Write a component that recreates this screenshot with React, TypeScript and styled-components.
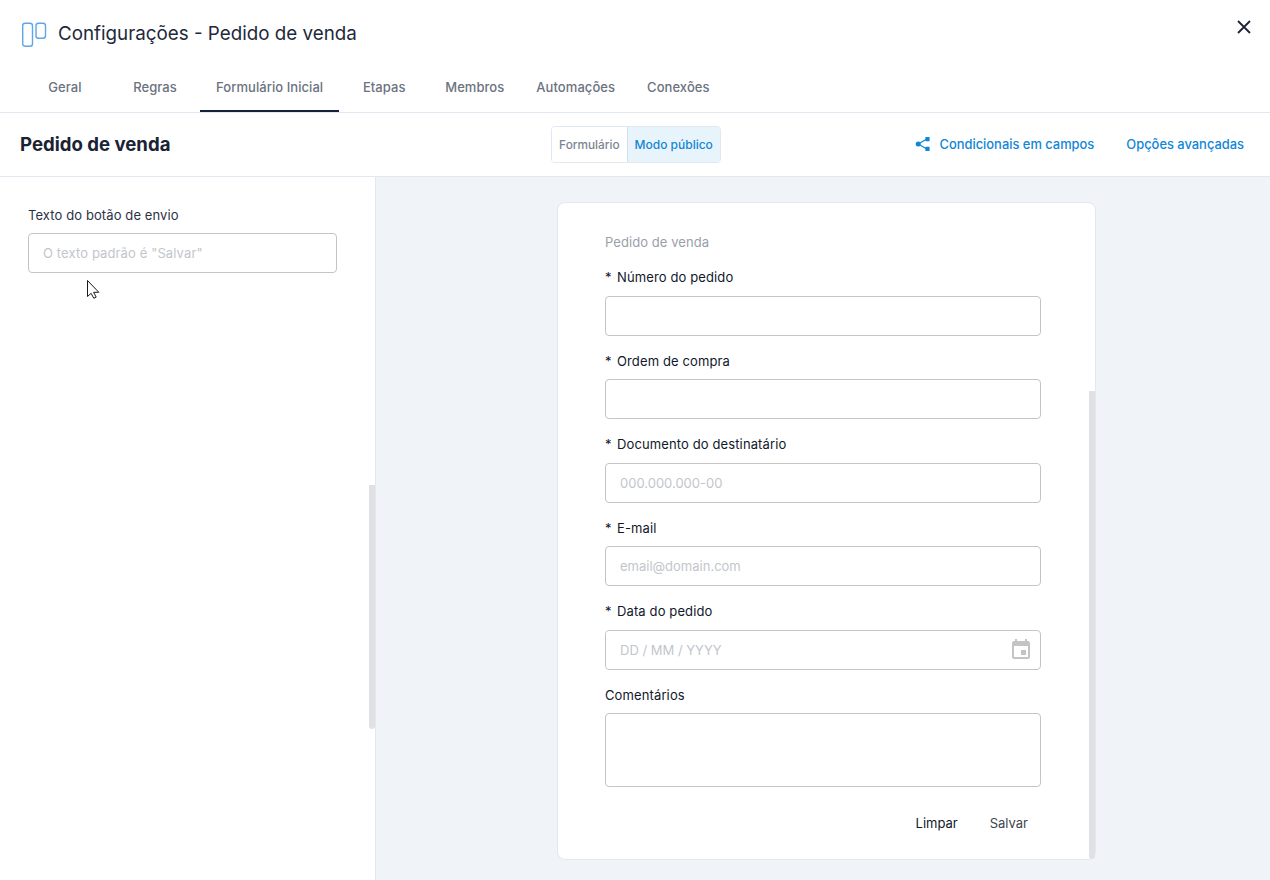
import React from "react";
import styled, { createGlobalStyle } from "styled-components";

const GlobalStyle = createGlobalStyle`
  html, body {
    margin: 0;
    height: 100%;
    background: #ffffff;
    font-family: Inter, "Noto Sans", sans-serif;
    overflow: hidden;
  }
  *, *:before, *:after {
    box-sizing: border-box;
  }
`;

const Page = styled.div`
  position: relative;
  width: 1270px;
  height: 880px;
  display: flex;
  flex-direction: column;
  overflow: hidden;
`;

const Header = styled.header`
  height: 113px;
  border-bottom: 1px solid #e2e8f0;
  display: flex;
  flex-direction: column;
`;

const TitleRow = styled.div`
  height: 60px;
  margin-top: 4px;
  padding: 0 17px 0 21px;
  display: flex;
  align-items: center;
  justify-content: space-between;
`;

const TitleGroup = styled.div`
  display: flex;
  align-items: center;
  gap: 11px;
`;

const Title = styled.h1`
  margin: 0;
  font-size: 18.8px;
  line-height: 26px;
  font-weight: 400;
  color: #1e293b;
`;

const CloseButton = styled.button`
  border: 0;
  padding: 0;
  background: none;
  width: 18px;
  height: 18px;
  margin-top: -14px;
  color: #1e2235;
  display: flex;
`;

const Tabs = styled.nav`
  flex: 1;
  display: flex;
  padding-left: 20px;
`;

const Tab = styled.div<{ $active?: boolean }>`
  min-width: 90px;
  padding: 0 16px;
  display: flex;
  align-items: center;
  justify-content: center;
  font-size: 13px;
  font-weight: 500;
  letter-spacing: 0.06px;
  color: #6b7280;
  white-space: nowrap;
  border-bottom: 2px solid ${(p) => (p.$active ? "#16213e" : "transparent")};
`;

const SubBar = styled.div`
  height: 64px;
  padding: 0 26px 0 20px;
  border-bottom: 1px solid #e2e8f0;
  display: grid;
  grid-template-columns: 1fr auto 1fr;
  align-items: center;
`;

const SubTitle = styled.h2`
  margin: 0 0 2px;
  font-size: 18.6px;
  font-weight: 700;
  color: #1a2233;
`;

const Toggle = styled.div`
  display: flex;
  height: 37px;
  margin-left: 8px;
  border: 1px solid #e2e8f0;
  border-radius: 4px;
  overflow: hidden;
`;

const ToggleItem = styled.div<{ $active?: boolean }>`
  padding: 0 7px;
  display: flex;
  align-items: center;
  font-size: ${(p) => (p.$active ? "12px" : "11.8px")};
  font-weight: 500;
  color: ${(p) => (p.$active ? "#1086d6" : "#7c8490")};
  background: ${(p) => (p.$active ? "#e8f4fb" : "#ffffff")};
  border-left: ${(p) => (p.$active ? "1px solid #d5e0ec" : "0")};
`;

const Actions = styled.div`
  display: flex;
  justify-content: flex-end;
  align-items: center;
  gap: 32px;
`;

const ActionLink = styled.a`
  display: flex;
  align-items: center;
  gap: 8px;
  padding-bottom: 1px;
  font-size: 12.9px;
  font-weight: 500;
  color: #1086d6;
  white-space: nowrap;
`;

const Body = styled.div`
  flex: 1;
  display: flex;
  min-height: 0;
`;

const Input = styled.input`
  display: block;
  width: 100%;
  height: 40px;
  padding: 0 14px;
  border: 1px solid #c4c4c4;
  border-radius: 4px;
  font: 400 13px Inter, sans-serif;
  background: #ffffff;
  outline: none;

  &::placeholder {
    color: #c2c6cc;
    opacity: 1;
  }
`;

const Sidebar = styled.aside`
  position: relative;
  width: 376px;
  padding: 28px 38px 0 28px;
  border-right: 1px solid #e2e8f0;

  ${Input} {
    letter-spacing: 0.12px;
  }
`;

const SideLabel = styled.label`
  display: block;
  font-size: 13px;
  line-height: 20px;
  font-weight: 400;
  letter-spacing: 0.1px;
  color: #2b3245;
  margin-bottom: 8px;
`;

const TextArea = styled.textarea`
  display: block;
  width: 100%;
  height: 74px;
  border: 1px solid #c4c4c4;
  border-radius: 4px;
  resize: none;
  outline: none;
`;

const DateBox = styled.div`
  height: 40px;
  padding-right: 7px;
  display: flex;
  align-items: center;
  border: 1px solid #c4c4c4;
  border-radius: 4px;

  ${Input} {
    flex: 1;
    height: 38px;
    border: 0;
  }

  svg {
    color: #c4c4c4;
    flex: none;
  }
`;

const Scrollbar = styled.div<{ $top: number; $height: number }>`
  position: absolute;
  top: ${(p) => p.$top}px;
  right: 0;
  width: 6px;
  height: ${(p) => p.$height}px;
  background: #dfe1e4;
  border-radius: 0 0 3px 3px;
`;

const Canvas = styled.main`
  flex: 1;
  background: #f0f3f8;
  padding: 25px 0 0 181px;
`;

const Card = styled.section`
  position: relative;
  width: 539px;
  height: 658px;
  padding: 29px 54px 0 47px;
  background: #ffffff;
  border: 1px solid #e2e8f0;
  border-radius: 8px;
`;

const CardTitle = styled.div`
  font-size: 13px;
  line-height: 20px;
  letter-spacing: 0.07px;
  color: #9aa0a8;
  margin-bottom: 15.4px;
`;

const Fields = styled.div`
  display: flex;
  flex-direction: column;
  gap: 15px;
`;

const FieldLabel = styled.label`
  display: block;
  font-size: 13px;
  line-height: 20px;
  letter-spacing: 0.12px;
  color: #10182b;
  margin-bottom: 8.5px;
`;

const Star = styled.span`
  display: inline-block;
  width: 12px;
`;

const Buttons = styled.div`
  display: flex;
  justify-content: flex-end;
  margin-top: 20px;
`;

const FormButton = styled.button<{ $muted?: boolean }>`
  height: 32px;
  padding: 0 13px;
  border: 0;
  background: none;
  font: 400 13px Inter, sans-serif;
  color: ${(p) => (p.$muted ? "#3f444d" : "#10182b")};
  & + & {
    margin-left: 6px;
  }
`;

const Cursor = styled.svg`
  position: absolute;
  left: 87px;
  top: 280px;
`;

const tabs = ["Geral", "Regras", "Formulário Inicial", "Etapas", "Membros", "Automações", "Conexões"];

const fields = [
  { label: "Número do pedido", required: true },
  { label: "Ordem de compra", required: true },
  { label: "Documento do destinatário", required: true, placeholder: "000.000.000-00" },
  { label: "E-mail", required: true, placeholder: "email@domain.com" },
];

const Logo = () => (
  <svg width="26" height="27" viewBox="0 0 26 27" fill="none" stroke="#5ea6e6" strokeWidth="1.4">
    <rect x="1.7" y="2.3" width="9.8" height="23" rx="2.5" />
    <rect x="15" y="2.3" width="9.5" height="15" rx="2.5" />
  </svg>
);

const CloseIcon = () => (
  <svg width="18" height="18" viewBox="0 0 18 18" fill="none" stroke="currentColor" strokeWidth="1.8">
    <path d="M3 3l12 12M15 3L3 15" />
  </svg>
);

const NodesIcon = () => (
  <svg width="16" height="16" viewBox="0 0 16 16" fill="#1086d6" stroke="#1086d6">
    <path d="M3 8L12 3M3 8l9 5" fill="none" strokeWidth="1.3" />
    <circle cx="3.2" cy="8" r="2.5" stroke="none" />
    <rect x="10.4" y="1" width="4.2" height="4.2" rx="0.6" stroke="none" />
    <rect x="10.4" y="10.8" width="4.2" height="4.2" rx="0.6" stroke="none" />
  </svg>
);

const CalendarIcon = () => (
  <svg width="24" height="24" viewBox="0 0 24 24" fill="currentColor">
    <path d="M17 12h-5v5h5v-5zM16 1v2H8V1H6v2H5c-1.11 0-1.99.9-1.99 2L3 19c0 1.1.89 2 2 2h14c1.1 0 2-.9 2-2V5c0-1.1-.9-2-2-2h-1V1h-2zm3 18H5V8h14v11z" />
  </svg>
);

const Pointer = () => (
  <Cursor width="14" height="20" viewBox="0 0 14 20" fill="#ffffff" stroke="#1a1a1a" strokeWidth="1">
    <path d="M.5.5v16l3.6-3.2 2.7 5 2.4-1.2-2.6-4.8h5.2z" />
  </Cursor>
);

const RequiredLabel = ({ text, required }: { text: string; required?: boolean }) => (
  <FieldLabel>
    {required && <Star>*</Star>}
    {text}
  </FieldLabel>
);

export default function App() {
  return (
    <Page>
      <GlobalStyle />
      <Header>
        <TitleRow>
          <TitleGroup>
            <Logo />
            <Title>Configurações - Pedido de venda</Title>
          </TitleGroup>
          <CloseButton>
            <CloseIcon />
          </CloseButton>
        </TitleRow>
        <Tabs>
          {tabs.map((t) => (
            <Tab key={t} $active={t === "Formulário Inicial"}>
              {t}
            </Tab>
          ))}
        </Tabs>
      </Header>
      <SubBar>
        <SubTitle>Pedido de venda</SubTitle>
        <Toggle>
          <ToggleItem>Formulário</ToggleItem>
          <ToggleItem $active>Modo público</ToggleItem>
        </Toggle>
        <Actions>
          <ActionLink>
            <NodesIcon />
            Condicionais em campos
          </ActionLink>
          <ActionLink>Opções avançadas</ActionLink>
        </Actions>
      </SubBar>
      <Body>
        <Sidebar>
          <SideLabel>Texto do botão de envio</SideLabel>
          <Input placeholder={'O texto padrão é "Salvar"'} />
          <Scrollbar $top={308} $height={244} />
        </Sidebar>
        <Canvas>
          <Card>
            <CardTitle>Pedido de venda</CardTitle>
            <Fields>
              {fields.map((f) => (
                <div key={f.label}>
                  <RequiredLabel text={f.label} required={f.required} />
                  <Input placeholder={f.placeholder} />
                </div>
              ))}
              <div>
                <RequiredLabel text="Data do pedido" required />
                <DateBox>
                  <Input placeholder="DD / MM / YYYY" />
                  <CalendarIcon />
                </DateBox>
              </div>
              <div>
                <RequiredLabel text="Comentários" />
                <TextArea />
              </div>
            </Fields>
            <Buttons>
              <FormButton>Limpar</FormButton>
              <FormButton $muted>Salvar</FormButton>
            </Buttons>
            <Scrollbar $top={188} $height={468} />
          </Card>
        </Canvas>
      </Body>
      <Pointer />
    </Page>
  );
}
